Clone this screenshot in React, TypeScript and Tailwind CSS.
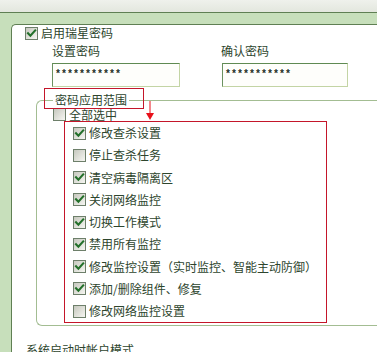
import React from "react";

function Box({ checked }: { checked?: boolean }) {
  return (
    <svg width="13" height="13" viewBox="0 0 13 13" className="shrink-0 block">
      <defs>
        <linearGradient id="cbg" x1="0" y1="0" x2="1" y2="1">
          <stop offset="0" stopColor="#c4c6bc" />
          <stop offset="1" stopColor="#f8f8f4" />
        </linearGradient>
      </defs>
      <rect x="0.5" y="0.5" width="12" height="12" fill="url(#cbg)" stroke="#6d7f6a" />
      {checked && (
        <path d="M3 6.2 L5.4 8.8 L10.2 3.4" fill="none" stroke="#23702a" strokeWidth="2.1" strokeLinecap="square" />
      )}
    </svg>
  );
}

const items: [string, boolean][] = [
  ["修改查杀设置", true],
  ["停止查杀任务", false],
  ["清空病毒隔离区", true],
  ["关闭网络监控", true],
  ["切换工作模式", true],
  ["禁用所有监控", true],
  ["修改监控设置（实时监控、智能主动防御）", true],
  ["添加/删除组件、修复", true],
  ["修改网络监控设置", false],
];

function Pwd({ w }: { w: string }) {
  return (
    <div
      className={`${w} h-[24px] border border-t-[#5f8a52] border-l-[#6b9160] border-b-[#c3d4a4] border-r-[#c3d4a4] bg-[#fefefb] flex items-center pl-[2px]`}
    >
      <span className="text-[10px] leading-[10px] text-[#1e2e1e] font-bold" style={{ fontFamily: '"Liberation Mono", monospace' }}>
        ***********
      </span>
    </div>
  );
}

export default function App() {
  return (
    <div
      className="w-[377px] h-[352px] overflow-hidden bg-[#c7dfbb] text-[12px] text-[#2d452d] flex flex-col"
      style={{ fontFamily: '"Noto Sans CJK SC", "Noto Sans", sans-serif' }}
    >
      <div className="h-[12px] shrink-0 bg-gradient-to-b from-[#eff1ec] to-[#e3e7de]" />
      <div className="h-[1px] shrink-0 bg-[#5f7f53]" />
      <div className="pl-[11px] pt-[11px]">
        <div className="w-[380px] h-[340px] bg-white border-l border-t border-[#5f7f53] rounded-tl-[5px]">
          <div className="pt-[1px]">
            <div className="h-[14px] flex items-center pl-[13px]">
              <Box checked />
              <span className="ml-[3px] leading-[14px]">启用瑞星密码</span>
            </div>
            <div className="mt-[4px] h-[14px] flex pl-[40px] leading-[14px]">
              <span className="w-[169px]">设置密码</span>
              <span>确认密码</span>
            </div>
            <div className="mt-[5px] flex pl-[40px]">
              <Pwd w="w-[128px]" />
              <div className="ml-[42px]">
                <Pwd w="w-[126px]" />
              </div>
            </div>
            <div className="mt-[13px] ml-[24px] relative border-l border-t border-b border-[#a3bd92] rounded-l-[6px]">
              <span className="absolute left-[16px] top-[-8px] bg-white px-[2px] leading-[14px]">密码应用范围</span>
              <div className="absolute left-[7px] top-[-13px] w-[100px] h-[21px] border border-[#c4162a]" />
              <svg className="absolute left-[108px] top-0" width="10" height="19" viewBox="0 0 10 19">
                <line x1="5" y1="0" x2="5" y2="13" stroke="#e8101a" strokeWidth="1" />
                <path d="M1 12 L9 12 L5 19 Z" fill="#e8101a" />
              </svg>
              <div className="mt-[7px] h-[13px] flex items-center pl-[16px]">
                <Box />
                <span className="ml-[3px] leading-[13px]">全部选中</span>
              </div>
              <div className="ml-[27px] w-[263px] border border-[#c4162a] mb-[2px]">
                {items.map(([t, c]) => (
                  <div key={t} className="h-[22.25px] flex items-center pl-[8px]">
                    <Box checked={c} />
                    <span className="ml-[3px] leading-[14px] whitespace-nowrap">{t}</span>
                  </div>
                ))}
              </div>
            </div>
            <div className="mt-[17px] pl-[14px] leading-[14px]">系统启动时帐户模式</div>
          </div>
        </div>
      </div>
    </div>
  );
}
